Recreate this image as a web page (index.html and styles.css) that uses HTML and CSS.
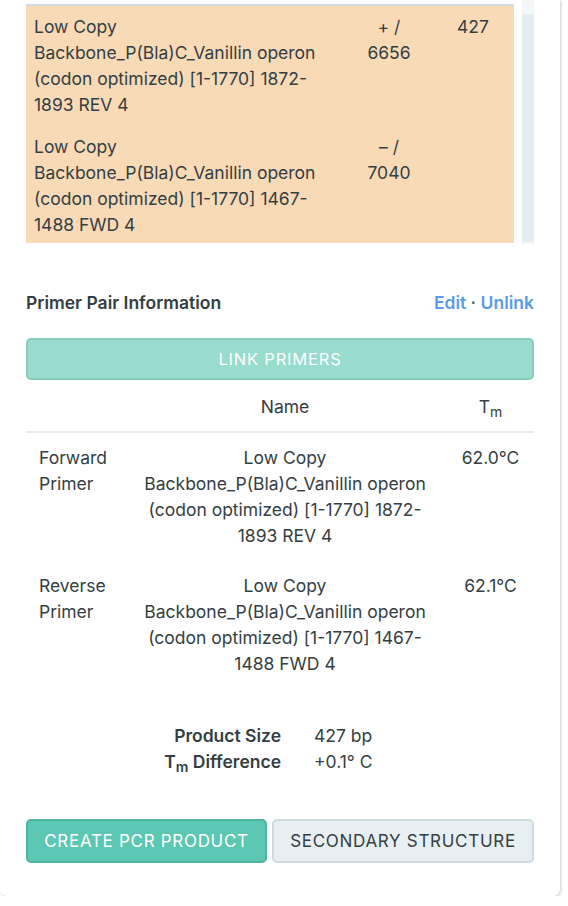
FILE: index.html
```html
<!DOCTYPE html>
<html>
<head>
<meta charset="utf-8">
<link rel="stylesheet" href="styles.css">
</head>
<body>
<div class="card">
  <div class="hits">
    <div class="hits-table">
      <div class="hit-row">
        <div class="hit-name">Low Copy Backbone_P(Bla)C_Vanillin operon (codon optimized) [1-1770] 1872-1893 REV 4</div>
        <div class="hit-strand">+ / 6656</div>
        <div class="hit-len">427</div>
      </div>
      <div class="hit-row">
        <div class="hit-name">Low Copy Backbone_P(Bla)C_Vanillin operon (codon optimized) [1-1770] 1467-1488 FWD 4</div>
        <div class="hit-strand">– / 7040</div>
        <div class="hit-len"></div>
      </div>
    </div>
    <div class="scrollbar"></div>
  </div>

  <div class="pair-head">
    <span class="pair-title">Primer Pair Information</span>
    <span class="pair-links"><span class="link">Edit</span><span class="dot"> · </span><span class="link">Unlink</span></span>
  </div>

  <button class="btn btn-link">LINK PRIMERS</button>

  <table class="primers">
    <colgroup><col class="c1"><col class="c2"><col class="c3"></colgroup>
    <thead>
      <tr><th></th><th>Name</th><th>T<sub>m</sub></th></tr>
    </thead>
    <tbody>
      <tr>
        <td class="kind">Forward Primer</td>
        <td class="name">Low Copy Backbone_P(Bla)C_Vanillin operon (codon optimized) [1-1770] 1872-1893 REV 4</td>
        <td class="tm">62.0°C</td>
      </tr>
      <tr>
        <td class="kind">Reverse Primer</td>
        <td class="name">Low Copy Backbone_P(Bla)C_Vanillin operon (codon optimized) [1-1770] 1467-1488 FWD 4</td>
        <td class="tm">62.1°C</td>
      </tr>
    </tbody>
  </table>

  <div class="summary">
    <div class="s-label">Product Size</div><div class="s-value">427 bp</div>
    <div class="s-label">T<sub>m</sub> Difference</div><div class="s-value">+0.1° C</div>
  </div>

  <div class="actions">
    <button class="btn btn-primary">CREATE PCR PRODUCT</button>
    <button class="btn btn-secondary">SECONDARY STRUCTURE</button>
  </div>
</div>
</body>
</html>
```

FILE: styles.css
```css
html, body {
  margin: 0;
  padding: 0;
  background: #ffffff;
}
body {
  font-family: Inter, "Open Sans", sans-serif;
  font-size: 17.5px;
  line-height: 26px;
  color: #343e43;
}
.card {
  width: 508px;
  padding: 0 26px 33px 26px;
  background: #ffffff;
  border-radius: 0 0 7px 7px;
  box-shadow: 1px 1px 3px rgba(60, 80, 90, 0.28);
}
.hits {
  display: flex;
  align-items: flex-start;
}
.hits-table {
  margin-top: 4px;
  width: 488px;
  height: 237px;
  overflow: hidden;
  border-top: 2px solid #cfdce2;
  background: #f8dab7;
}
.scrollbar {
  margin-left: 8px;
  width: 12px;
  height: 244px;
  background: linear-gradient(#f4f7f8 0, #f4f7f8 14px, #e5edf0 14px, #e5edf0 242px, #f4f7f8 242px);
}
.hit-row {
  display: grid;
  grid-template-columns: 328px 54px 1fr;
  padding: 8px 8px;
}
.hit-name {
  padding-right: 33px;
}
.hit-strand {
  text-align: center;
}
.hit-len {
  padding-left: 41px;
}
.pair-head {
  margin-top: 49px;
  display: flex;
  justify-content: space-between;
  line-height: 20px;
  font-size: 17.5px;
  font-weight: 600;
}
.pair-title {
  color: #343e43;
}
.link {
  color: #5b9ae9;
}
.dot {
  color: #5d676b;
}
.btn {
  font-family: Inter, "Open Sans", sans-serif;
  display: block;
  box-sizing: border-box;
  border-radius: 5px;
  text-transform: uppercase;
  cursor: pointer;
}
.btn-link {
  margin-top: 25px;
  width: 508px;
  height: 42px;
  background: #97dcce;
  border: 2px solid #85cdbf;
  color: #ffffff;
  font-size: 16.5px;
  letter-spacing: 0.8px;
}
.primers {
  width: 508px;
  border-collapse: collapse;
  table-layout: fixed;
}
.c1 { width: 97px; }
.c2 { width: 324px; }
.c3 { width: 87px; }
.primers th {
  font-weight: 400;
  text-align: center;
  padding: 14px 13px 11px;
  border-bottom: 2px solid #e6edf0;
}
.primers td {
  padding: 12px 13px;
  vertical-align: top;
}
.primers td.name {
  padding-left: 14.5px;
  padding-right: 14.5px;
}
.primers td.tm {
  padding-left: 8px;
  padding-right: 8px;
}
.primers td.name, .primers td.tm {
  text-align: center;
}
sub {
  font-size: 0.8em;
  vertical-align: -0.3em;
  line-height: 0;
}
.summary {
  margin-top: 34px;
  display: grid;
  grid-template-columns: 255px 1fr;
  column-gap: 33px;
}
.s-label {
  text-align: right;
  font-weight: 600;
}
.actions {
  margin-top: 44px;
  display: flex;
  gap: 5px;
}
.actions .btn {
  flex: 1 1 auto;
  height: 44px;
  padding: 0 16px;
  font-size: 17px;
  letter-spacing: 0.7px;
}
.btn-primary {
  background: #5cc7b2;
  border: 2px solid #4cb49f;
  color: #ffffff;
}
.btn-secondary {
  background: #e8eff2;
  border: 2px solid #cfdadf;
  color: #343e43;
}
```
